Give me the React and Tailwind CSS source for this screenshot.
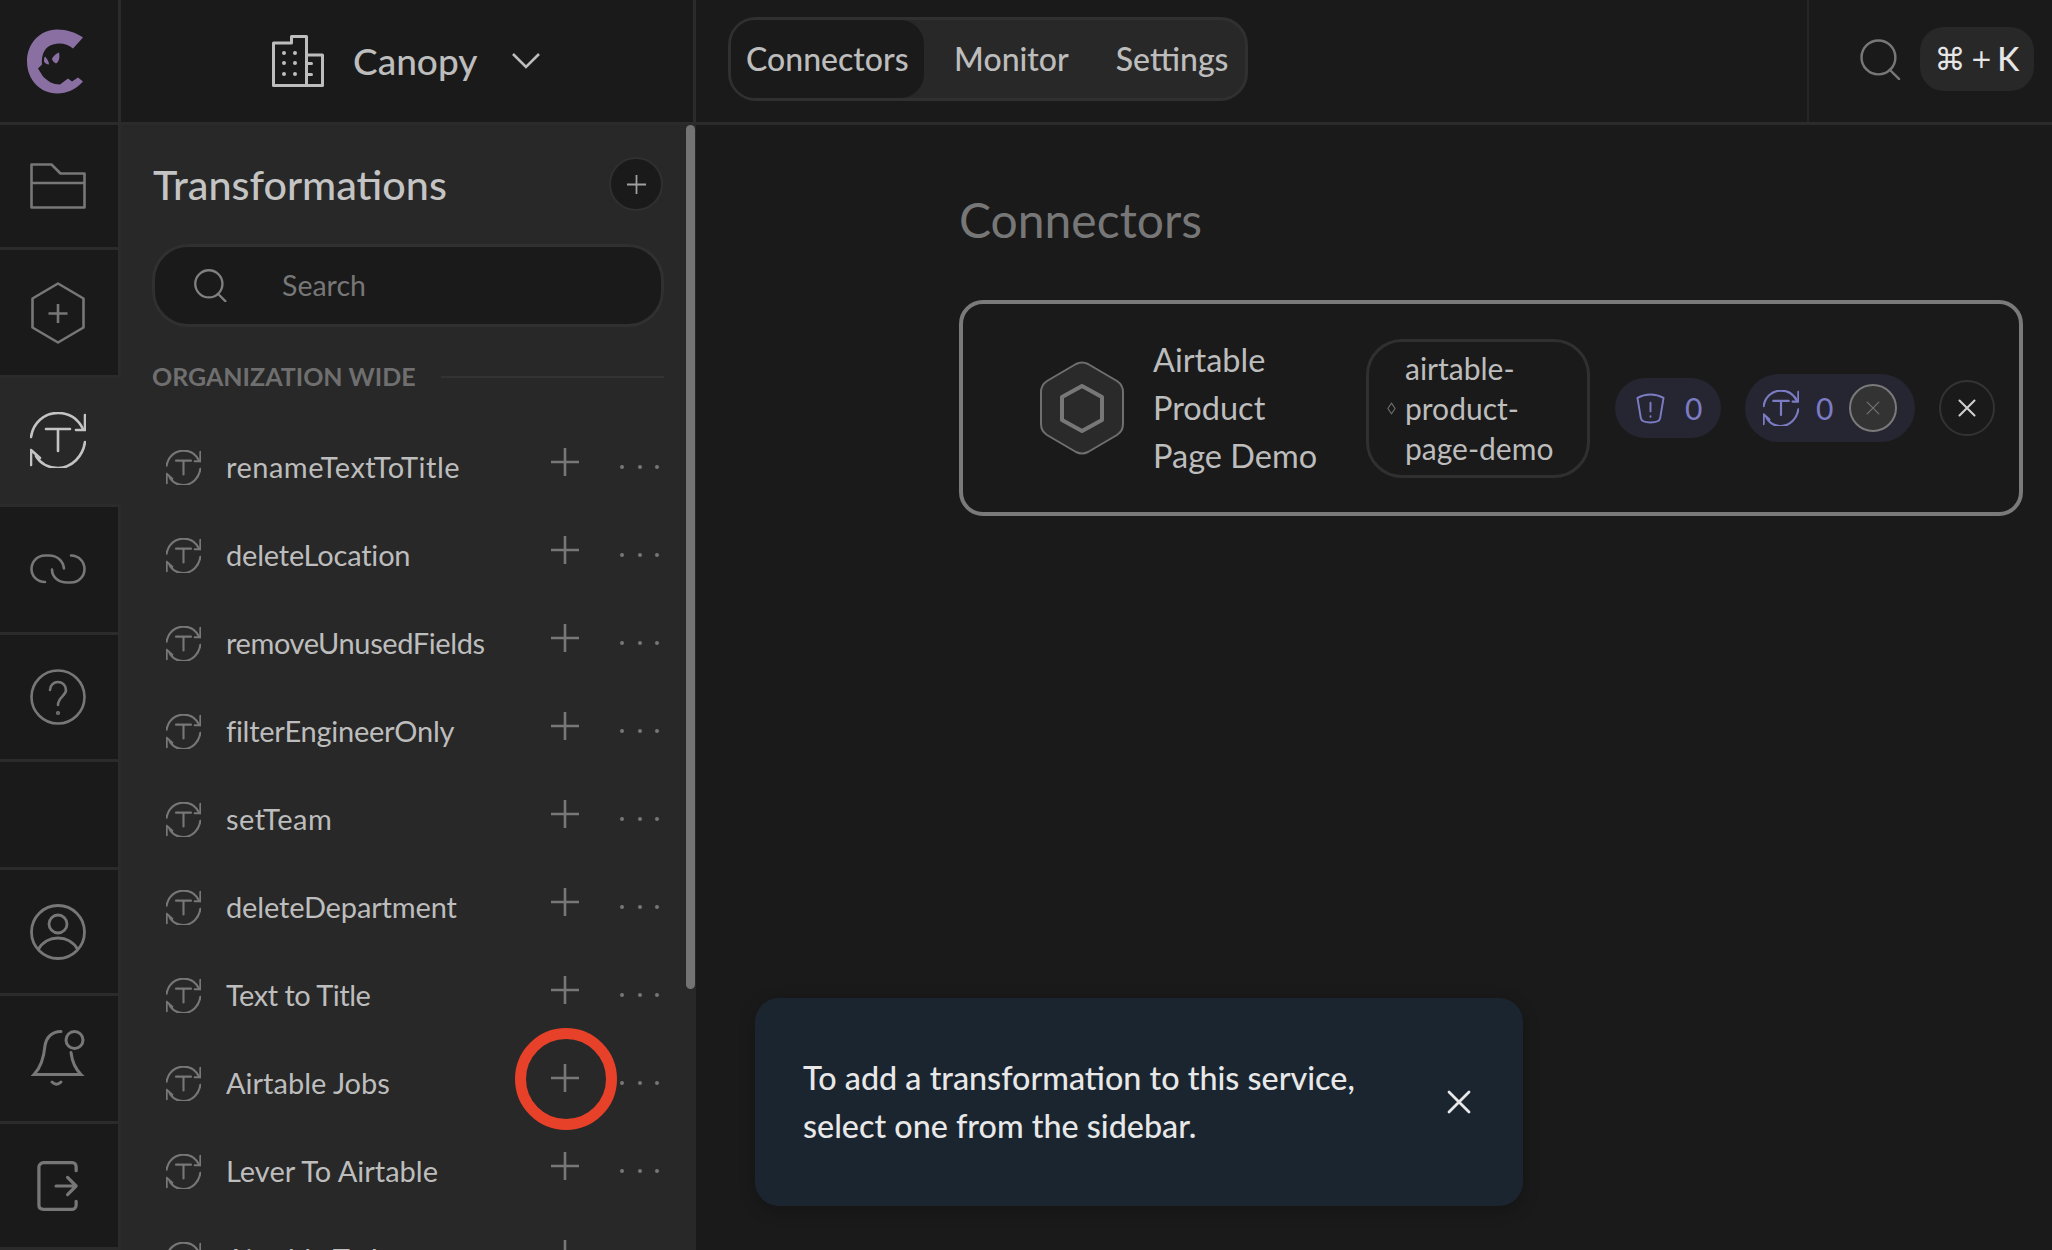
import React from 'react';

const rows = [
  { name: 'renameTextToTitle', track: 'tracking-[0.5px]' },
  { name: 'deleteLocation', track: 'tracking-[-0.2px]' },
  { name: 'removeUnusedFields', track: 'tracking-[-0.4px]' },
  { name: 'filterEngineerOnly', track: 'tracking-[-0.25px]' },
  { name: 'setTeam', track: 'tracking-[0.5px]' },
  { name: 'deleteDepartment', track: 'tracking-[-0.15px]' },
  { name: 'Text to Title', track: 'tracking-[-0.5px]' },
  { name: 'Airtable Jobs', track: 'tracking-[0px]' },
  { name: 'Lever To Airtable', track: 'tracking-[0px]' },
  { name: 'Airtable To Lever', track: 'tracking-[0px]' },
];

function TIcon({ className, sw = 2.6 }) {
  return (
    <svg viewBox="0 0 56 56" fill="none" stroke="currentColor" strokeWidth={sw} strokeLinecap="round" strokeLinejoin="round" className={className}>
      <path d="M1 25C3 11 14 1 28 1c11 0 20 6 25 16" />
      <path d="M55 3v15h-9" />
      <path d="M55 30c-2 14-13 26-27 26-10 0-18-5-22-12" />
      <path d="M1 53V38l9 8" />
      <path d="M16 17h24M28 17v22" />
    </svg>
  );
}

function Plus({ className }) {
  return (
    <svg viewBox="0 0 28 28" fill="none" stroke="currentColor" strokeWidth="2.6" className={className}>
      <path d="M14 0v28M0 14h28" />
    </svg>
  );
}

function Cross({ className, sw = 2.5 }) {
  return (
    <svg viewBox="0 0 24 24" fill="none" stroke="currentColor" strokeWidth={sw} strokeLinecap="round" className={className}>
      <path d="M2 2l20 20M22 2L2 22" />
    </svg>
  );
}

function SearchGlyph({ className, sw = 2.4 }) {
  return (
    <svg viewBox="0 0 40 40" fill="none" stroke="currentColor" strokeWidth={sw} strokeLinecap="round" className={className}>
      <circle cx="18" cy="18" r="16.5" />
      <path d="M29 30l9 9" />
    </svg>
  );
}

function Logo() {
  return (
    <svg viewBox="0 0 57 64" className="w-[57px] h-[65px]">
      <path
        fill="#8a6fa3"
        d="M56 8C49 3 40 0 30 0 13 0 0 14 0 32c0 18 13 32 30 32 10 0 19-4 26-12l-5-4-6 4-4-3-8 6c-7 0-12-3-17-8l-5-8 4-4c-1-10 3-18 11-20 7-2 14-1 20 4z"
      />
      <path fill="#8a6fa3" d="M32 23c1 5 0 9-3 11-2-1-4-3-4-5 2-3 4-5 7-6zM18 27c2 2 4 5 4 8-2 0-4-1-5-3 0-2 0-4 1-5z" />
    </svg>
  );
}

function RailRow({ h, active, children }) {
  return (
    <div
      className={`flex items-center justify-center shrink-0 border-b-[3px] border-[#2b2b2b] ${h} ${
        active ? 'bg-[#282828] border-r-0 pr-[5px] pb-[3px]' : 'border-r-[3px] pr-[2px]'
      }`}
    >
      {children}
    </div>
  );
}

function Row({ name, track }) {
  return (
    <div className="flex items-center h-[88px] shrink-0 pl-[14px] pr-[5px]">
      <TIcon className="w-[35px] h-[35px] text-[#777777] shrink-0" sw={3.4} />
      <span className={`ml-[25px] flex-1 text-[29px] text-[#bdbdbd] whitespace-nowrap ${track}`}>{name}</span>
      <Plus className="w-[28px] h-[28px] mb-[10px] text-[#777777] shrink-0" />
      <div className="ml-[41px] w-[39px] flex justify-between items-center shrink-0">
        <span className="w-[4px] h-[4px] rounded-full bg-[#777777]" />
        <span className="w-[4px] h-[4px] rounded-full bg-[#777777]" />
        <span className="w-[4px] h-[4px] rounded-full bg-[#777777]" />
      </div>
    </div>
  );
}

export default function App() {
  return (
    <div className="relative flex flex-col w-[2052px] h-[1250px] overflow-hidden bg-[#1a1a1a] font-['Lato',sans-serif]">
      {/* top bar */}
      <div className="flex h-[125px] shrink-0 border-b-[3px] border-[#2b2b2b]">
        <div className="w-[121px] shrink-0 flex items-center justify-center pr-[8px] border-r-[3px] border-[#2b2b2b]">
          <Logo />
        </div>
        <div className="w-[575px] shrink-0 flex items-center pl-[151px] border-r-[3px] border-[#2b2b2b]">
          <svg viewBox="0 0 52 52" fill="none" stroke="#bdbdbd" strokeWidth="3" strokeLinejoin="round" className="w-[52px] h-[52px] shrink-0">
            <path d="M1.5 50.5V8h18V1.5h15v49zM34.500 20H50.500v30.500H34.500" />
            <g stroke="none" fill="#bdbdbd">
              <circle cx="12" cy="18" r="2" /><circle cx="23" cy="18" r="2" />
              <circle cx="12" cy="28" r="2" /><circle cx="23" cy="28" r="2" />
              <circle cx="12" cy="39" r="2" /><circle cx="23" cy="39" r="2" />
              <rect x="34" y="27" width="7" height="3" rx="1.500" /><rect x="34" y="38" width="7" height="3" rx="1.500" />
            </g>
          </svg>
          <span className="ml-[29px] text-[37px] font-medium text-[#bdbdbd]">Canopy</span>
          <svg viewBox="0 0 28 16" fill="none" stroke="#bdbdbd" strokeWidth="2.6" className="ml-[35px] w-[28px] h-[16px] shrink-0">
            <path d="M1 1l13 13L27 1" />
          </svg>
        </div>
        <div className="flex-1 flex items-center pl-[32px] pb-[4px]">
          <div className="flex items-stretch w-[520px] h-[84px] rounded-[28px] border-[3px] border-[#303030] bg-[#282828] text-[32px] font-medium text-[#bdbdbd]">
            <div className="w-[193px] flex items-center justify-center rounded-[24px] bg-[#1a1a1a]">Connectors</div>
            <div className="w-[176px] flex items-center justify-center">Monitor</div>
            <div className="w-[146px] flex items-center justify-center">Settings</div>
          </div>
        </div>
        <div className="w-[245px] shrink-0 flex items-center pl-[51px] pb-[4px] border-l-2 border-[#262626]">
          <SearchGlyph className="w-[41px] h-[41px] text-[#777777] shrink-0" />
          <div className="ml-[19px] w-[114px] h-[64px] rounded-[24px] bg-[#282828] flex items-center justify-center text-[33px] font-medium text-[#e6e6e6] whitespace-nowrap font-['DejaVu_Sans',sans-serif]">
            <span className="text-[31px]">⌘</span>
            <span className="ml-[5px] text-[26px]">+</span>
            <span className="ml-[5px] font-['Lato',sans-serif]">K</span>
          </div>
        </div>
      </div>

      <div className="flex flex-1 min-h-0">
        {/* icon rail */}
        <div className="flex flex-col w-[121px] shrink-0">
          <RailRow h="h-[125px]">
            <svg viewBox="0 0 56 46" fill="none" stroke="#777777" strokeWidth="2.6" strokeLinejoin="round" className="w-[56px] h-[46px]">
              <path d="M1.500 44.500V1.500h20l9 9h24v34zM1.500 20h53" />
            </svg>
          </RailRow>
          <RailRow h="h-[128px]">
            <svg viewBox="0 0 54 62" fill="none" stroke="#777777" strokeWidth="2.6" strokeLinejoin="round" className="w-[54px] h-[62px]">
              <path d="M27 1.500l25.500 15v29L27 60.500 1.500 45.500v-29z" />
              <path d="M27 22v19M17.500 31.500h19" />
            </svg>
          </RailRow>
          <RailRow h="h-[129px]" active>
            <TIcon className="w-[56px] h-[56px] text-[#c4c4c4]" />
          </RailRow>
          <RailRow h="h-[128px]">
            <svg viewBox="0 0 56 30" fill="none" stroke="#777777" strokeWidth="2.6" strokeLinecap="round" className="w-[56px] h-[30px] mb-[2px]">
              <path d="M15 28C7 28 1.500 22 1.500 15S7 1.500 15 1.500h4c8 0 14 5 15 13" />
              <path d="M41 1.500C49 1.500 54.500 8 54.500 15S49 28.500 41 28.500h-4c-8 0-15-5-15-13" />
            </svg>
          </RailRow>
          <RailRow h="h-[127px]">
            <svg viewBox="0 0 56 56" fill="none" stroke="#777777" strokeWidth="2.6" strokeLinecap="round" className="w-[56px] h-[56px]">
              <circle cx="28" cy="28" r="26.500" />
              <path d="M20 21c0-5 4-8 8-8s8 3 8 8c0 6-8 7-8 15" />
              <circle cx="28" cy="44" r="0.8" />
            </svg>
          </RailRow>
          <RailRow h="h-[108px]" />
          <RailRow h="h-[126px]">
            <svg viewBox="0 0 56 56" fill="none" stroke="#777777" strokeWidth="2.8" className="w-[56px] h-[56px]">
              <circle cx="28" cy="28" r="26.500" />
              <circle cx="28" cy="20" r="9" />
              <path d="M8 46c4-8 12-12 20-12s16 4 20 12" />
            </svg>
          </RailRow>
          <RailRow h="h-[128px]">
            <svg viewBox="0 0 54 58" fill="none" stroke="#777777" strokeWidth="3" strokeLinecap="round" className="w-[54px] h-[58px]">
              <path d="M30 1.500c-10 0-15 7-16 14-1 11-3 21-11 29h47c-6-6-9-14-10-22" />
              <path d="M21 52c3 3 6 3 9 0" />
              <circle cx="43.500" cy="10" r="8.500" />
            </svg>
          </RailRow>
          <RailRow h="flex-1">
            <svg viewBox="0 0 44 52" fill="none" stroke="#777777" strokeWidth="3.4" strokeLinecap="round" strokeLinejoin="round" className="w-[42px] h-[52px]">
              <path d="M41 10V6c0-3-2-4.500-4-4.500H7C4 1.500 2 4 2 6v40c0 3 2 4.500 5 4.500h30c2 0 4-2 4-4.500v-4" />
              <path d="M20 26h21M32 17l9 9-9 9" />
            </svg>
          </RailRow>
        </div>

        {/* transformations sidebar */}
        <div className="relative flex flex-col w-[575px] shrink-0 bg-[#282828] pl-[31px] pr-[32px] overflow-hidden">
          <div className="flex items-center justify-between pt-[32px] shrink-0">
            <span className="ml-[1px] text-[41.300px] font-medium text-[#c4c4c4] leading-[54px]">Transformations</span>
            <div className="mr-[1px] w-[54px] h-[54px] rounded-full bg-[#1a1a1a] border-2 border-[#303030] flex items-center justify-center">
              <Plus className="w-[19px] h-[19px] text-[#a0a0a0]" />
            </div>
          </div>
          <div className="mt-[33px] h-[83px] shrink-0 rounded-[36px] bg-[#1a1a1a] border-[3px] border-[#303030] flex items-center pl-[39px]">
            <SearchGlyph className="w-[33px] h-[33px] text-[#808080] shrink-0" sw={2.8} />
            <span className="ml-[55px] text-[28.500px] text-[#777777]">Search</span>
          </div>
          <div className="mt-[35px] h-[30px] shrink-0 flex items-center">
            <span className="text-[25px] font-bold text-[#6f6f6f] whitespace-nowrap">ORGANIZATION WIDE</span>
            <span className="ml-[25px] flex-1 h-[2px] bg-[#333333]" />
          </div>
          <div className="mt-[31px] flex flex-col">
            {rows.map((row) => (
              <Row key={row.name} name={row.name} track={row.track} />
            ))}
          </div>
          {/* scrollbar thumb */}
          <div className="absolute top-0 right-[1px] w-[9px] h-[864px] rounded-full bg-[#737373]" />
        </div>

        {/* main */}
        <div className="flex-1 min-w-0 pl-[263px] pr-[29px] pt-[67px]">
          <h1 className="text-[48px] leading-[56px] text-[#777777]">Connectors</h1>
          <div className="mt-[52px] h-[216px] rounded-[24px] border-4 border-[#7a7a7a] flex items-center pl-[77px]">
            <svg viewBox="0 0 84 94" fill="none" className="w-[84px] h-[94px] shrink-0">
              <path fill="#2a2a2a" stroke="#6f6f6f" strokeWidth="2" strokeLinejoin="round" d="M36 3q6-3 12 0l29 17q6 4 6 11v32q0 7-6 11L48 91q-6 3-12 0L7 74q-6-4-6-11V31q0-7 6-11z" />
              <path stroke="#777777" strokeWidth="4" strokeLinejoin="round" d="M42 25l20 11v23L42 70 22 59V36z" />
            </svg>
            <div className="ml-[29px] w-[213px] shrink-0 text-[32.500px] leading-[48px] text-[#bdbdbd]">
              Airtable
              <br />
              Product
              <br />
              Page Demo
            </div>
            <div className="w-[224px] h-[139px] shrink-0 rounded-[36px] border-[3px] border-[#303030] flex items-center pl-[18px]">
              <svg viewBox="0 0 10 14" fill="none" stroke="#6f6f6f" strokeWidth="1.2" className="w-[9px] h-[13px] shrink-0">
                <path d="M5 1l4 6-4 6-4-6z" />
              </svg>
              <div className="ml-[9px] text-[30px] leading-[40px] text-[#bdbdbd]">
                airtable-
                <br />
                product-
                <br />
                page-demo
              </div>
            </div>
            <div className="ml-[25px] w-[106px] h-[60px] shrink-0 rounded-full bg-[#262632] flex items-center pl-[21px] text-[#7c7cc4]">
              <svg viewBox="0 0 30 32" fill="none" stroke="currentColor" strokeWidth="2" strokeLinecap="round" strokeLinejoin="round" className="w-[29px] h-[31px] shrink-0">
                <path d="M1.500 5C6 2.500 10 1.500 15 1.500S24 2.500 28.500 5L25 26c-.5 3-5 4.500-10 4.500S5.500 29 5 26z" />
                <path d="M15 10v9M15 24v.5" />
              </svg>
              <span className="ml-[20px] text-[30px]">0</span>
            </div>
            <div className="ml-[24px] w-[170px] h-[68px] shrink-0 rounded-full bg-[#262632] flex items-center pl-[18px] text-[#7c7cc4]">
              <TIcon className="w-[36px] h-[36px] shrink-0" sw={3.4} />
              <span className="ml-[17px] text-[30px]">0</span>
              <div className="ml-[16px] w-[48px] h-[48px] shrink-0 rounded-full bg-[#333333] border-2 border-[#7a7a7a] flex items-center justify-center">
                <Cross className="w-[14px] h-[14px] text-[#777777]" sw={1.8} />
              </div>
            </div>
            <div className="ml-[24px] w-[56px] h-[56px] shrink-0 rounded-full border-2 border-[#333333] flex items-center justify-center">
              <Cross className="w-[18px] h-[18px] text-[#cfcfcf]" sw={2.8} />
            </div>
          </div>
        </div>
      </div>

      {/* annotation ring over the row's plus */}
      <div className="absolute left-[515px] top-[1028px] w-[102px] h-[102px] rounded-full border-[11px] border-[#e8412a]" />

      {/* toast */}
      <div className="absolute left-[755px] top-[998px] w-[768px] h-[208px] rounded-[24px] bg-[#1b2530] shadow-[0_4px_16px_rgba(0,0,0,0.25)] flex items-center pl-[48px]">
        <p className="w-[590px] text-[32.300px] font-medium leading-[48px] text-[#e8e8e8]">
          To add a transformation to this service,
          <br />
          select one from the sidebar.
        </p>
        <Cross className="ml-[54px] w-[24px] h-[24px] text-[#e8e8e8]" sw={2.8} />
      </div>
    </div>
  );
}
